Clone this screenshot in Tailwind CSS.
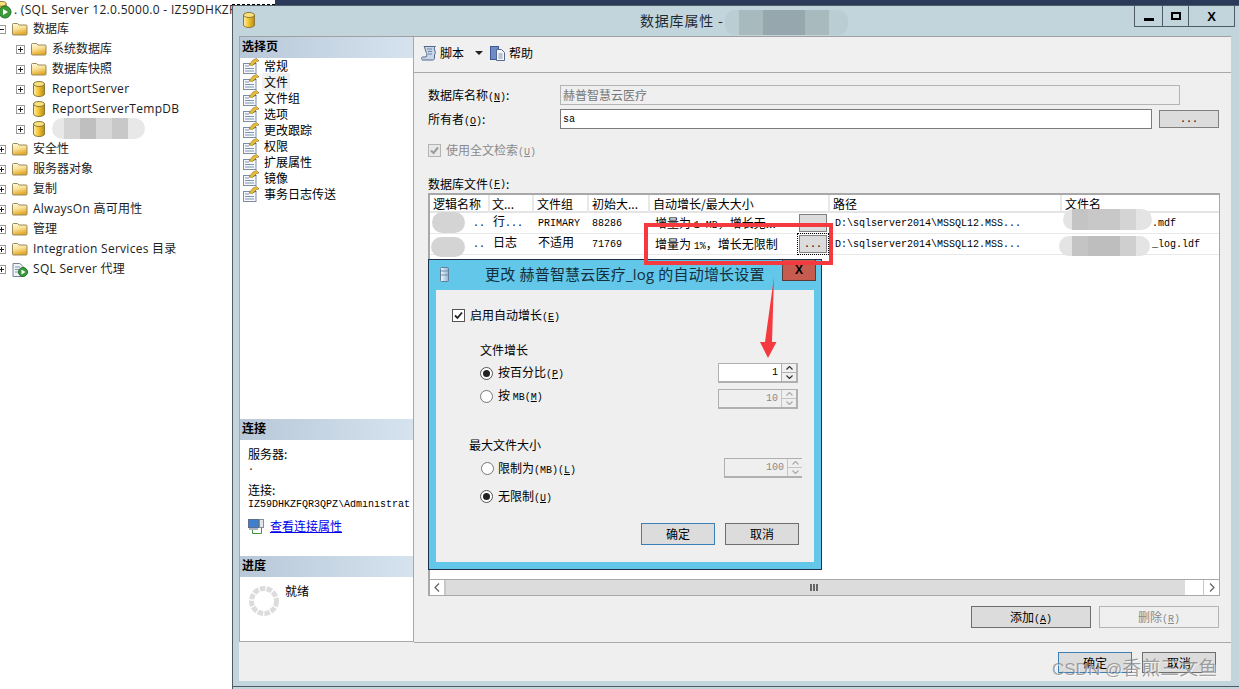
<!DOCTYPE html>
<html lang="zh-CN">
<head>
    <meta charset="UTF-8">
    <title>数据库属性</title>
    <script src="https://cdn.jsdelivr.net/npm/@tailwindcss/browser@4"></script>
</head>
<body class="relative w-[1239px] h-[689px] overflow-hidden bg-white text-black text-[12px] font-['Noto_Sans_CJK_SC',sans-serif]">
    <!-- Icon sprite -->
    <svg class="absolute w-0 h-0" aria-hidden="true">
        <defs>
            <linearGradient id="folderFill" x1="0" y1="0" x2="0.3" y2="1">
                <stop offset="0" stop-color="#fffbe6"/><stop offset="0.5" stop-color="#fbe39a"/><stop offset="1" stop-color="#e4a92a"/>
            </linearGradient>
            <linearGradient id="dbFill" x1="0" y1="0" x2="1" y2="0">
                <stop offset="0" stop-color="#fdf0a8"/><stop offset="0.5" stop-color="#f0c02c"/><stop offset="1" stop-color="#b78a12"/>
            </linearGradient>
            <linearGradient id="dbBlue" x1="0" y1="0" x2="1" y2="0">
                <stop offset="0" stop-color="#f4fafd"/><stop offset="1" stop-color="#8fb3cf"/>
            </linearGradient>
            <symbol id="folder" viewBox="0 0 16 14">
                <path d="M.5 2.500q0-1 1-1h4l1.500 1.500h7q1 0 1 1v8q0 1-1 1h-12.500q-1 0-1-1z" fill="url(#folderFill)" stroke="#9a8a58"/>
            </symbol>
            <symbol id="db" viewBox="0 0 12 16">
                <path d="M.5 3v10c0 1.300 2.500 2.500 5.500 2.500s5.500-1.200 5.500-2.500V3z" fill="url(#dbFill)" stroke="#8d7a3a"/>
                <ellipse cx="6" cy="3" rx="5.500" ry="2.500" fill="#fbe27c" stroke="#8d7a3a"/>
            </symbol>
            <symbol id="page" viewBox="0 0 16 16">
                <rect x=".5" y="5.500" width="12.500" height="10" fill="#f6f8fb" stroke="#7d8ea3"/>
                <path d="M2 8h4M2 10.500h9M2 13h9" stroke="#7c93b8"/>
                <path d="M6 7l4-5 3.500-1.500L16 3l-2.500.5-4 4z" fill="#efbc3a" stroke="#8a6a1c" stroke-width=".6"/>
                <path d="M9.500 7.500l3-3 1 .8z" fill="#4e7a34"/>
            </symbol>
            <symbol id="expand" viewBox="0 0 9 9">
                <rect x=".5" y=".5" width="8" height="8" fill="#fff" stroke="#9a9a9a"/>
                <path d="M2 4.500h5M4.500 2v5" stroke="#222"/>
            </symbol>
            <symbol id="collapse" viewBox="0 0 9 9">
                <rect x=".5" y=".5" width="8" height="8" fill="#fff" stroke="#9a9a9a"/>
                <path d="M2 4.500h5" stroke="#222"/>
            </symbol>
            <symbol id="spinUp" viewBox="0 0 7 4"><path d="M.5 3.500l3-3 3 3" fill="none" stroke="currentColor" stroke-width="1.200"/></symbol>
            <symbol id="spinDown" viewBox="0 0 7 4"><path d="M.5 .5l3 3 3-3" fill="none" stroke="currentColor" stroke-width="1.200"/></symbol>
        </defs>
    </svg>

    <div class="flex h-full">
        <!-- Object explorer -->
        <aside class="w-[232px] h-full shrink-0 overflow-hidden font-['Open_Sans','Noto_Sans_CJK_SC',sans-serif] text-[#1c1c1c] text-[12px]">
            <div class="flex items-center h-[19px] whitespace-nowrap">
                <svg class="w-[17px] h-[20px] -ml-[5px] shrink-0" viewBox="0 0 17 20">
                    <use href="#db" x="0" y="1" width="12" height="15"/>
                    <circle cx="10" cy="12" r="6" fill="#3c9a38" stroke="#24702a"/>
                    <path d="M8 9l5 3-5 3z" fill="#fff"/>
                </svg>
                <span class="ml-[2px] tracking-[0.3px]">. (SQL Server 12.0.5000.0 - IZ59DHKZFQR3QPZ</span>
            </div>
            <div class="flex items-center h-5 -ml-[3px]">
                <svg class="w-[9px] h-[9px] shrink-0"><use href="#collapse"/></svg>
                <svg class="w-[16px] h-[14px] ml-[6px]"><use href="#folder"/></svg>
                <span class="ml-[5px]">数据库</span>
            </div>
            <div class="flex items-center h-5 pl-[16px]">
                <svg class="w-[9px] h-[9px] shrink-0"><use href="#expand"/></svg>
                <svg class="w-[16px] h-[14px] ml-[6px]"><use href="#folder"/></svg>
                <span class="ml-[5px]">系统数据库</span>
            </div>
            <div class="flex items-center h-5 pl-[16px]">
                <svg class="w-[9px] h-[9px] shrink-0"><use href="#expand"/></svg>
                <svg class="w-[16px] h-[14px] ml-[6px]"><use href="#folder"/></svg>
                <span class="ml-[5px]">数据库快照</span>
            </div>
            <div class="flex items-center h-5 pl-[16px]">
                <svg class="w-[9px] h-[9px] shrink-0"><use href="#expand"/></svg>
                <svg class="w-[12px] h-[16px] ml-[8px]"><use href="#db"/></svg>
                <span class="ml-[7px] tracking-[0.3px]">ReportServer</span>
            </div>
            <div class="flex items-center h-5 pl-[16px]">
                <svg class="w-[9px] h-[9px] shrink-0"><use href="#expand"/></svg>
                <svg class="w-[12px] h-[16px] ml-[8px]"><use href="#db"/></svg>
                <span class="ml-[7px] tracking-[0.3px]">ReportServerTempDB</span>
            </div>
            <div class="flex items-center h-5 pl-[16px]">
                <svg class="w-[9px] h-[9px] shrink-0"><use href="#expand"/></svg>
                <svg class="w-[12px] h-[16px] ml-[8px]"><use href="#db"/></svg>
            </div>
            <div class="flex items-center h-5 -ml-[3px]">
                <svg class="w-[9px] h-[9px] shrink-0"><use href="#expand"/></svg>
                <svg class="w-[16px] h-[14px] ml-[6px]"><use href="#folder"/></svg>
                <span class="ml-[5px]">安全性</span>
            </div>
            <div class="flex items-center h-5 -ml-[3px]">
                <svg class="w-[9px] h-[9px] shrink-0"><use href="#expand"/></svg>
                <svg class="w-[16px] h-[14px] ml-[6px]"><use href="#folder"/></svg>
                <span class="ml-[5px]">服务器对象</span>
            </div>
            <div class="flex items-center h-5 -ml-[3px]">
                <svg class="w-[9px] h-[9px] shrink-0"><use href="#expand"/></svg>
                <svg class="w-[16px] h-[14px] ml-[6px]"><use href="#folder"/></svg>
                <span class="ml-[5px]">复制</span>
            </div>
            <div class="flex items-center h-5 -ml-[3px]">
                <svg class="w-[9px] h-[9px] shrink-0"><use href="#expand"/></svg>
                <svg class="w-[16px] h-[14px] ml-[6px]"><use href="#folder"/></svg>
                <span class="ml-[5px] tracking-[0.25px]">AlwaysOn 高可用性</span>
            </div>
            <div class="flex items-center h-5 -ml-[3px]">
                <svg class="w-[9px] h-[9px] shrink-0"><use href="#expand"/></svg>
                <svg class="w-[16px] h-[14px] ml-[6px]"><use href="#folder"/></svg>
                <span class="ml-[5px]">管理</span>
            </div>
            <div class="flex items-center h-5 -ml-[3px]">
                <svg class="w-[9px] h-[9px] shrink-0"><use href="#expand"/></svg>
                <svg class="w-[16px] h-[14px] ml-[6px]"><use href="#folder"/></svg>
                <span class="ml-[5px] tracking-[0.27px]">Integration Services 目录</span>
            </div>
            <div class="flex items-center h-5 -ml-[3px]">
                <svg class="w-[9px] h-[9px] shrink-0"><use href="#expand"/></svg>
                <svg class="w-[16px] h-[16px] ml-[6px]" viewBox="0 0 16 16">
                    <path d="M1 2.500h7l3 3v10H1z" fill="#eef3f8" stroke="#75859a"/>
                    <path d="M3 6h5M3 8.500h4M3 11h3" stroke="#7e93ad"/>
                    <circle cx="11" cy="11" r="4.500" fill="#3c9a38" stroke="#24702a"/>
                    <path d="M9.500 8.500l4 2.500-4 2.500z" fill="#fff"/>
                </svg>
                <span class="ml-[5px] tracking-[0.3px]">SQL Server 代理</span>
            </div>
        </aside>

        <div class="flex-1 flex flex-col min-w-0">
            <!-- What shows of the window behind -->
            <div class="flex h-[5px] shrink-0">
                <div class="w-[43px] border-b border-dashed border-black"></div>
                <div class="flex-1 bg-[#2a3a58]"></div>
            </div>

            <!-- Properties window -->
            <div class="flex-1 flex flex-col bg-[#c2d5dc] border-l border-t border-[#4f5b66] min-h-0">
                <div class="flex h-[30px] shrink-0">
                    <svg class="w-[12px] h-[16px] ml-[10px] mt-[6px] shrink-0"><use href="#db"/></svg>
                    <span class="ml-[385px] mt-[4px] text-[14px] tracking-[0.8px] text-[#1e2b33] whitespace-nowrap">数据库属性 -</span>
                    <div class="flex ml-auto mr-[4px] h-[21px] border border-t-0 border-[#4f5b66]">
                        <div class="w-[28px] flex items-center justify-center border-r border-[#4f5b66]"><div class="w-[10px] h-[3px] bg-black mt-[6px]"></div></div>
                        <div class="w-[26px] flex items-center justify-center border-r border-[#4f5b66]"><div class="w-[10px] h-[8px] border-2 border-black"></div></div>
                        <div class="w-[45px] flex items-center justify-center font-['Liberation_Sans'] font-bold text-[13px] leading-none">X</div>
                    </div>
                </div>

                <div class="flex flex-col mx-[6px] w-[992px] h-[645px] shrink-0 bg-[#efefef] border-t border-[#a0a0a0]">
                    <div class="flex flex-1 min-h-0">
                        <!-- Left pane -->
                        <div class="flex flex-col w-[175px] h-full bg-white border-l border-r border-b border-[#a8a8a8] shrink-0">
                            <div class="flex-1">
                                <div class="h-[21px] flex items-center pl-[2px] pb-[4px] font-bold bg-gradient-to-r from-[#b8c8d8] to-[#d6e3ef]">选择页</div>
                                <ul>
                                    <li class="flex items-center h-4 pl-[3px]"><svg class="w-4 h-4"><use href="#page"/></svg><span class="ml-[5px]">常规</span></li>
                                    <li class="flex items-center h-4 pl-[3px]"><svg class="w-4 h-4"><use href="#page"/></svg><span class="ml-[3px] px-[2px] bg-[#f0f0f0]">文件</span></li>
                                    <li class="flex items-center h-4 pl-[3px]"><svg class="w-4 h-4"><use href="#page"/></svg><span class="ml-[5px]">文件组</span></li>
                                    <li class="flex items-center h-4 pl-[3px]"><svg class="w-4 h-4"><use href="#page"/></svg><span class="ml-[5px]">选项</span></li>
                                    <li class="flex items-center h-4 pl-[3px]"><svg class="w-4 h-4"><use href="#page"/></svg><span class="ml-[5px]">更改跟踪</span></li>
                                    <li class="flex items-center h-4 pl-[3px]"><svg class="w-4 h-4"><use href="#page"/></svg><span class="ml-[5px]">权限</span></li>
                                    <li class="flex items-center h-4 pl-[3px]"><svg class="w-4 h-4"><use href="#page"/></svg><span class="ml-[5px]">扩展属性</span></li>
                                    <li class="flex items-center h-4 pl-[3px]"><svg class="w-4 h-4"><use href="#page"/></svg><span class="ml-[5px]">镜像</span></li>
                                    <li class="flex items-center h-4 pl-[3px]"><svg class="w-4 h-4"><use href="#page"/></svg><span class="ml-[5px]">事务日志传送</span></li>
                                </ul>
                            </div>
                            <div class="h-[137px] shrink-0">
                                <div class="h-[21px] flex items-center pl-[2px] pb-[4px] font-bold bg-gradient-to-r from-[#b8c8d8] to-[#d6e3ef]">连接</div>
                                <div class="pl-[8px] pt-[7px] leading-[14px]">
                                    <div>服务器:</div>
                                    <div class="font-['Liberation_Mono'] text-[10px]">.</div>
                                    <div class="mt-[8px]">连接:</div>
                                    <div class="mt-[3px] font-['Liberation_Mono'] text-[10px] leading-[10px] whitespace-nowrap overflow-hidden">IZ59DHKZFQR3QPZ\Administrat</div>
                                    <div class="flex items-center mt-[8px] h-4">
                                        <svg class="w-[16px] h-[16px]" viewBox="0 0 16 16">
                                            <rect x=".5" y="1.500" width="10" height="8" fill="#3e7fd0" stroke="#5a6f8c"/>
                                            <rect x="11.500" y="1.500" width="4" height="8" fill="#dfe6ee" stroke="#7f8ea0"/>
                                            <rect x="1" y="10" width="9" height="2" fill="#aab4c0"/>
                                            <path d="M4.500 12v3.500h9V10" fill="none" stroke="#3c9a38"/>
                                        </svg>
                                        <a class="ml-[6px] text-[#0000ee] underline">查看连接属性</a>
                                    </div>
                                </div>
                            </div>
                            <div class="h-[85px] shrink-0">
                                <div class="h-[21px] flex items-center pl-[2px] pb-[4px] font-bold bg-gradient-to-r from-[#b8c8d8] to-[#d6e3ef]">进度</div>
                                <div class="flex pl-[9px] pt-[9px]">
                                    <svg class="w-[30px] h-[30px]" viewBox="0 0 30 30"><circle cx="15" cy="15" r="12.500" fill="none" stroke="#dcdcdc" stroke-width="5" stroke-dasharray="5.500 1.300"/></svg>
                                    <span class="ml-[6px] -mt-[4px]">就绪</span>
                                </div>
                            </div>
                        </div>

                        <!-- Right pane -->
                        <div class="flex-1 flex flex-col min-w-0">
                            <div class="flex items-center h-[36px] shrink-0 pl-[7px] pb-[3px] bg-[#f0f0f0] border-b border-[#a8a8a8]">
                                <svg class="w-4 h-4" viewBox="0 0 16 16">
                                    <path d="M3 1.500h11.500c-1.500 1-1.500 2-.8 3.500s.8 3.500-.2 5v3.500c0 1-1 1.500-2 1.500H2c-1 0-1.500-.7-1.500-1.500s.5-1.500 1.500-1.500h3c1-1.500 1-3 .3-4.500S4 3 3 1.500z" fill="#c9d6e8" stroke="#52688a"/>
                                    <path d="M6 4h5M7 6.500h4M7 9h4" stroke="#6d84a8"/>
                                </svg>
                                <span class="ml-[3px]">脚本</span>
                                <svg class="w-[8px] h-[4px] ml-[11px]" viewBox="0 0 8 4"><path d="M0 0h8L4 4z" fill="#222"/></svg>
                                <svg class="w-4 h-4 ml-[7px]" viewBox="0 0 16 16">
                                    <rect x=".5" y="1.500" width="8" height="13" fill="#6f8cc4" stroke="#3f5a92"/>
                                    <path d="M6.500 4.500h5l3 3v8h-8z" fill="#f4f6fa" stroke="#53688c"/>
                                    <path d="M8.500 9h4M8.500 11h4M8.500 13h4" stroke="#7d8fa8"/>
                                </svg>
                                <span class="ml-[3px]">帮助</span>
                            </div>

                            <div class="flex-1 flex flex-col pl-[14px] min-h-0">
                                <div class="flex items-center h-5 mt-[12px]">
                                    <span class="w-[132px]">数据库名称<span class="font-['Liberation_Mono'] text-[10px]">(<u>N</u>)</span>:</span>
                                    <div class="flex items-center w-[620px] h-5 px-[2px] border border-[#b4b4b4] text-[#777]">赫普智慧云医疗</div>
                                </div>
                                <div class="flex items-center h-5 mt-[4px]">
                                    <span class="w-[132px]">所有者<span class="font-['Liberation_Mono'] text-[10px]">(<u>O</u>)</span>:</span>
                                    <div class="flex items-center w-[592px] h-5 px-[2px] bg-white border border-[#7a7a7a] font-['Liberation_Mono'] text-[10px]">sa</div>
                                    <div class="flex items-center justify-center w-[60px] h-[18px] pt-[2px] ml-[7px] bg-[#dcdcdc] border border-[#808080] font-['Liberation_Mono'] text-[10px] leading-none whitespace-nowrap">...</div>
                                </div>
                                <div class="flex items-center h-4 mt-[13px] text-[#8a8a8a]">
                                    <div class="flex items-center justify-center w-[13px] h-[13px] border border-[#b4b4b4] bg-[#e8e8e8]">
                                        <svg class="w-[9px] h-[9px]" viewBox="0 0 9 9"><path d="M1 4.500l2.500 2.500L8 1.500" fill="none" stroke="#9a9a9a" stroke-width="2"/></svg>
                                    </div>
                                    <span class="ml-[5px]">使用全文检索<span class="font-['Liberation_Mono'] text-[10px]">(<u>U</u>)</span></span>
                                </div>
                                <div class="flex items-center h-4 mt-[18px]">数据库文件<span class="font-['Liberation_Mono'] text-[10px]">(<u>F</u>)</span>:</div>

                                <!-- Files grid -->
                                <div class="flex flex-col w-[792px] h-[403px] mt-[1px] bg-white border-2 border-[#a8a8a8] border-r border-b">
                                    <div class="grid grid-cols-[60px_44px_55px_61px_180px_232px_1fr] h-[18px] shrink-0 border-b-2 border-[#e4e4e4]">
                                        <div class="pl-[3px] leading-[18px] border-r-2 border-[#e8e8e8]">逻辑名称</div>
                                        <div class="pl-[2px] leading-[18px] border-r-2 border-[#e8e8e8]">文...</div>
                                        <div class="pl-[3px] leading-[18px] border-r-2 border-[#e8e8e8]">文件组</div>
                                        <div class="pl-[3px] leading-[18px] border-r-2 border-[#e8e8e8]">初始大...</div>
                                        <div class="pl-[3px] leading-[18px] border-r-2 border-[#e8e8e8]">自动增长/最大大小</div>
                                        <div class="pl-[3px] leading-[18px] border-r-2 border-[#e8e8e8]">路径</div>
                                        <div class="pl-[3px] leading-[18px]">文件名</div>
                                    </div>
                                    <div class="grid grid-cols-[60px_44px_55px_61px_180px_232px_1fr] h-[21px] shrink-0 items-center border-b border-[#e8e8e8] font-['Liberation_Mono','Noto_Sans_CJK_SC',monospace] text-[10px]">
                                        <div class="pl-[43px]">..</div>
                                        <div class="pl-[3px]"><span class="text-[12px]">行</span>...</div>
                                        <div class="pl-[4px]">PRIMARY</div>
                                        <div class="pl-[3px]">88286</div>
                                        <div class="flex items-center pl-[5px]"><span class="text-[12px] font-['Noto_Sans_CJK_SC']">增量为 <span class="font-['Liberation_Mono'] text-[10px]">1 MB</span>，增长无...</span></div>
                                        <div class="pl-[5px]">D:\sqlserver2014\MSSQL12.MSS...</div>
                                        <div class="pl-[90px]">.mdf</div>
                                    </div>
                                    <div class="grid grid-cols-[60px_44px_55px_61px_180px_232px_1fr] h-[21px] shrink-0 items-center border-b border-[#e8e8e8] font-['Liberation_Mono','Noto_Sans_CJK_SC',monospace] text-[10px]">
                                        <div class="pl-[43px]">..</div>
                                        <div class="pl-[3px] text-[12px]">日志</div>
                                        <div class="pl-[4px] text-[12px]">不适用</div>
                                        <div class="pl-[3px]">71769</div>
                                        <div class="flex items-center pl-[5px]"><span class="text-[12px] font-['Noto_Sans_CJK_SC']">增量为 <span class="font-['Liberation_Mono'] text-[10px]">1%</span>，增长无限制</span></div>
                                        <div class="pl-[5px]">D:\sqlserver2014\MSSQL12.MSS...</div>
                                        <div class="pl-[90px]">_log.ldf</div>
                                    </div>
                                    <div class="flex-1"></div>
                                    <div class="flex h-[16px] shrink-0 border-t border-[#a8a8a8]">
                                        <div class="flex items-center justify-center w-[16px] bg-white border-r-2 border-[#c8c8c8]">
                                            <svg class="w-[6px] h-[9px]" viewBox="0 0 6 9"><path d="M5 .5L1 4.500l4 4" fill="none" stroke="#666" stroke-width="1.300"/></svg>
                                        </div>
                                        <div class="flex items-center justify-center w-[739px] pr-[3px] bg-[#dcdcdc]">
                                            <div class="flex gap-px"><i class="block w-[2px] h-[7px] bg-[#666]"></i><i class="block w-[2px] h-[7px] bg-[#666]"></i><i class="block w-[2px] h-[7px] bg-[#666]"></i></div>
                                        </div>
                                        <div class="w-[18px]"></div>
                                        <div class="flex items-center justify-center flex-1 border-l border-[#c8c8c8]">
                                            <svg class="w-[6px] h-[9px]" viewBox="0 0 6 9"><path d="M1 .5l4 4-4 4" fill="none" stroke="#666" stroke-width="1.300"/></svg>
                                        </div>
                                    </div>
                                </div>

                                <div class="flex gap-[8px] mt-[10px] ml-[543px]">
                                    <div class="flex items-center justify-center w-[120px] h-[22px] bg-[#dcdcdc] border border-[#6e6e6e]"><span>添加<span class="font-['Liberation_Mono'] text-[10px]">(<u>A</u>)</span></span></div>
                                    <div class="flex items-center justify-center w-[120px] h-[22px] border border-[#b4b4b4] text-[#8a8a8a]"><span>删除<span class="font-['Liberation_Mono'] text-[10px]">(<u>R</u>)</span></span></div>
                                </div>
                            </div>
                        </div>
                    </div>

                    <!-- Footer -->
                    <div class="flex justify-end gap-[10px] h-[39px] shrink-0 pt-[9px] pr-[15px] border-t border-[#a8a8a8] ml-[175px]">
                        <div class="flex items-center justify-center w-[74px] h-[21px] bg-[#dcdcdc] border border-[#3a7fb5]">确定</div>
                        <div class="flex items-center justify-center w-[74px] h-[21px] bg-[#dcdcdc] border border-[#6e6e6e]">取消</div>
                    </div>
                </div>
                <div class="h-px mt-[5px] shrink-0 bg-[#4f5b66]"></div>
            </div>
        </div>
    </div>

    <!-- Blurred-out names -->
    <div class="absolute left-[52px] top-[118px] w-[93px] h-[21px] rounded-full bg-[#e8e8e8] overflow-hidden flex px-[12px]"><i class="block w-[16px] bg-[#d4d4d4]"></i><i class="block w-[16px] bg-[#bfbfbf]"></i><i class="block w-[16px] bg-[#d8d8d8]"></i><i class="block w-[16px] bg-[#c8c8c8]"></i></div>
    <div class="absolute left-[725px] top-[10px] w-[123px] h-[25px] rounded-[10px] bg-[#b6c9cf]/70 overflow-hidden flex px-[14px]"><i class="block w-[24px] bg-[#a9babf]"></i><i class="block w-[42px] bg-[#96a8ad]"></i><i class="block w-[24px] bg-[#a9babf]"></i></div>
    <div class="absolute left-[432px] top-[212px] w-[33px] h-[21px] rounded-full bg-[#d4d4d4]"></div>
    <div class="absolute left-[431px] top-[237px] w-[34px] h-[20px] rounded-full bg-[#d4d4d4]"></div>
    <div class="absolute left-[1063px] top-[209px] w-[89px] h-[21px] rounded-full bg-[#e4e4e4] overflow-hidden flex px-[9px]"><i class="block w-[16px] bg-[#c4c4c4]"></i><i class="block w-[32px] bg-[#c8c8c8]"></i><i class="block w-[16px] bg-[#d4d4d4]"></i></div>
    <div class="absolute left-[1059px] top-[236px] w-[91px] h-[20px] rounded-full bg-[#e4e4e4] overflow-hidden flex px-[13px]"><i class="block w-[16px] bg-[#c4c4c4]"></i><i class="block w-[32px] bg-[#bebebe]"></i><i class="block w-[16px] bg-[#cfcfcf]"></i></div>

    <!-- "..." buttons of the autogrowth column -->
    <div class="absolute left-[799px] top-[214px] flex items-center justify-center w-[28px] h-[18px] pt-[2px] bg-[#dcdcdc] border border-[#808080] font-['Liberation_Mono'] text-[10px] leading-none whitespace-nowrap">...</div>
    <div class="absolute left-[797px] top-[233px] p-px border border-dotted border-black">
        <div class="flex items-center justify-center w-[28px] h-[18px] pt-[2px] bg-[#dcdcdc] border border-[#808080] font-['Liberation_Mono'] text-[10px] leading-none whitespace-nowrap">...</div>
    </div>

    <!-- Autogrowth dialog -->
    <div class="absolute left-[428px] top-[259px] w-[394px] h-[311px] flex flex-col bg-[#62c7e8] border border-[#1f2f45]">
        <div class="relative flex items-center h-[30px] shrink-0">
            <svg class="w-[9px] h-[15px] ml-[11px] -mt-[2px]" viewBox="0 0 9 15">
                <rect x=".5" y=".5" width="8" height="14" rx="1" fill="url(#dbBlue)" stroke="#5f7f9a"/>
                <path d="M1 4h7M1 8h7" stroke="#6e90ad"/>
            </svg>
            <span class="ml-[36px] -mt-[2px] text-[15px] tracking-[0.2px] text-[#14303f] font-['Open_Sans','Noto_Sans_CJK_SC',sans-serif] whitespace-nowrap">更改 赫普智慧云医疗_log 的自动增长设置</span>
            <div class="absolute right-[5px] top-0 flex items-center justify-center w-[34px] h-[21px] bg-[#c75b50] border border-t-0 border-[#5d3a38] font-['Liberation_Sans'] font-bold text-[12px] leading-none">X</div>
        </div>
        <div class="flex flex-col w-[378px] h-[272px] mx-[7px] bg-[#efefef] pt-[19px]">
            <div class="flex items-center h-[13px] pl-[16px]">
                <div class="flex items-center justify-center w-[13px] h-[13px] bg-white border border-[#555]">
                    <svg class="w-[9px] h-[9px]" viewBox="0 0 9 9"><path d="M1 4.500l2.500 2.500L8 1.500" fill="none" stroke="#222" stroke-width="1.800"/></svg>
                </div>
                <span class="ml-[5px]">启用自动增长<span class="font-['Liberation_Mono'] text-[10px]">(<u>E</u>)</span></span>
            </div>

            <div class="flex items-center h-4 mt-[20px] pl-[44px]">文件增长</div>
            <div class="flex items-center h-5 mt-[5px] pl-[44px] pr-[16px]">
                <div class="flex items-center justify-center w-[13px] h-[13px] rounded-full bg-white border border-[#555]"><div class="w-[7px] h-[7px] rounded-full bg-[#222]"></div></div>
                <span class="ml-[5px] mb-[2px]">按百分比<span class="font-['Liberation_Mono'] text-[10px]">(<u>P</u>)</span></span>
                <div class="flex ml-auto w-[80px] h-5 bg-white border border-[#b0b0b0] border-r-2 border-b-2">
                    <div class="flex-1 pr-[3px] text-right font-['Liberation_Mono'] text-[10px] leading-[17px]">1</div>
                    <div class="flex flex-col w-[15px] border-l border-[#b0b0b0] text-[#333]">
                        <div class="flex items-center justify-center h-[9px] bg-[#f0f0f0] border-b border-[#b0b0b0]"><svg class="w-[7px] h-[4px]"><use href="#spinUp"/></svg></div>
                        <div class="flex items-center justify-center flex-1 bg-[#f0f0f0]"><svg class="w-[7px] h-[4px]"><use href="#spinDown"/></svg></div>
                    </div>
                </div>
            </div>
            <div class="flex items-center h-5 mt-[6px] pl-[44px] pr-[16px]">
                <div class="w-[13px] h-[13px] mb-[6px] rounded-full bg-white border border-[#777]"></div>
                <span class="ml-[5px] mb-[8px]">按 <span class="font-['Liberation_Mono'] text-[10px]">MB(<u>M</u>)</span></span>
                <div class="flex ml-auto w-[80px] h-5 border border-[#b0b0b0] border-r-2 border-b-2 text-[#8a8a8a]">
                    <div class="flex-1 pr-[3px] text-right font-['Liberation_Mono'] text-[10px] leading-[17px]">10</div>
                    <div class="flex flex-col w-[15px] border-l border-[#c4c4c4] text-[#aaa]">
                        <div class="flex items-center justify-center h-[9px] border-b border-[#c4c4c4]"><svg class="w-[7px] h-[4px]"><use href="#spinUp"/></svg></div>
                        <div class="flex items-center justify-center flex-1"><svg class="w-[7px] h-[4px]"><use href="#spinDown"/></svg></div>
                    </div>
                </div>
            </div>

            <div class="flex items-center h-4 mt-[28px] pl-[33px]">最大文件大小</div>
            <div class="flex items-center h-5 mt-[5px] pl-[45px] pr-[12px]">
                <div class="w-[13px] h-[13px] rounded-full bg-white border border-[#777]"></div>
                <span class="ml-[4px]">限制为<span class="font-['Liberation_Mono'] text-[10px]">(MB)(<u>L</u>)</span></span>
                <div class="flex ml-auto w-[78px] h-5 border border-[#b0b0b0] border-r-0 border-b-2 text-[#8a8a8a]">
                    <div class="flex-1 pr-[3px] text-right font-['Liberation_Mono'] text-[10px] leading-[17px]">100</div>
                    <div class="flex flex-col w-[15px] border-l border-[#c4c4c4] text-[#aaa]">
                        <div class="flex items-center justify-center h-[9px] border-b border-[#c4c4c4]"><svg class="w-[7px] h-[4px]"><use href="#spinUp"/></svg></div>
                        <div class="flex items-center justify-center flex-1"><svg class="w-[7px] h-[4px]"><use href="#spinDown"/></svg></div>
                    </div>
                </div>
            </div>
            <div class="flex items-center h-5 mt-[8px] pl-[44px]">
                <div class="flex items-center justify-center w-[13px] h-[13px] rounded-full bg-white border border-[#555]"><div class="w-[7px] h-[7px] rounded-full bg-[#222]"></div></div>
                <span class="ml-[5px]">无限制<span class="font-['Liberation_Mono'] text-[10px]">(<u>U</u>)</span></span>
            </div>

            <div class="flex justify-end gap-[10px] mt-[17px] pr-[15px]">
                <div class="flex items-center justify-center w-[74px] h-[22px] bg-[#dcdcdc] border border-[#3a7fb5]">确定</div>
                <div class="flex items-center justify-center w-[74px] h-[22px] bg-[#dcdcdc] border border-[#6e6e6e]">取消</div>
            </div>
        </div>
    </div>

    <!-- Annotations drawn on the screenshot -->
    <div class="absolute left-[644px] top-[223px] w-[189px] h-[42px] border-[4px] border-[#f53a3f]"></div>
    <svg class="absolute left-[755px] top-[275px] w-[28px] h-[86px]" viewBox="0 0 28 86">
        <path d="M19 2L17 67h4.500L13 83 5 67h5z" fill="#f53a3f"/>
    </svg>

    <!-- Site watermark -->
    <div class="absolute left-[1052px] top-[654px] font-['Liberation_Sans','Noto_Sans_CJK_SC',sans-serif] text-[19px] leading-[30px] whitespace-nowrap text-[#7d7d7d]/70 [text-shadow:1px_1px_0_rgba(255,255,255,0.6)]"><span class="text-[17px]">CSDN @</span>香煎三文鱼</div>
</body>
</html>
